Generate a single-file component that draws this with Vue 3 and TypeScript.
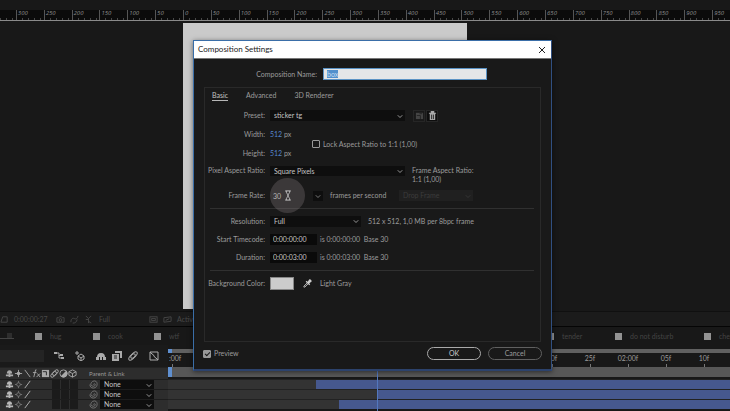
<script setup lang="ts">
import { onMounted, ref } from 'vue'

interface Layer {
  id: number
  start: number
}

const rulerMarks = ['', 300, 250, 200, 150, 100, 50, 0, 50, 100, 150, 200, 250, 300, 350, 400, 450, 500, 550, 600, 650, 700, 750, 800, 850, 900, 950]
const timeMarks = [':00f', '05f', '10f', '15f', '20f', '25f', '01:00f', '05f', '10f', '15f', '20f', '25f', '02:00f', '05f', '10f']
const compTabs = ['', 'hug', 'cook', 'wtf', 'tender', 'do not disturb', 'che']
const layers: Layer[] = [
  { id: 1, start: 26.4 },
  { id: 2, start: 37.2 },
  { id: 3, start: 30.5 },
]

const compName = ref('box')
const frameRate = ref('30')
const startTimecode = ref('0:00:00:00')
const duration = ref('0:00:03:00')
const lockAspect = ref(false)
const preview = ref(true)
const nameInput = ref<HTMLInputElement | null>(null)

onMounted(() => {
  nameInput.value?.focus()
  nameInput.value?.select()
})
</script>

<template>
  <div class="app">
    <header class="ruler">
      <div class="ruler-track">
        <span v-for="(mark, i) in rulerMarks" :key="i" class="ruler-mark">{{ mark }}</span>
      </div>
    </header>

    <main class="viewport">
      <div class="canvas"></div>
    </main>

    <div class="viewer-bar">
      <svg class="ico" viewBox="0 0 10 10"><path d="M1 8 3 2h5v6z" /></svg>
      <span class="viewer-time">0:00:00:27</span>
      <svg class="ico" viewBox="0 0 10 10"><path d="M1 3h2l1-1h2l1 1h2v5H1z" /><circle cx="5" cy="5.5" r="1.5" /></svg>
      <svg class="ico" viewBox="0 0 10 10"><path d="M1 8c0-4 2-5 4-4s3 0 4-3M3 9c3 0 4-1 5-4" /></svg>
      <svg class="ico" viewBox="0 0 10 10"><path d="M2 1l3 3 3-3M5 4v5M2 5h3M5 7l3 2" /></svg>
      <span class="viewer-res">Full</span>
      <svg class="ico" viewBox="0 0 10 10"><rect x="1" y="2" width="8" height="6" /><rect x="3" y="4" width="4" height="2" /></svg>
      <svg class="ico" viewBox="0 0 10 10"><path d="M1 8V3l8-1v5zM3 6l4-2" /></svg>
      <span>Active</span>
    </div>

    <nav class="comp-tabs">
      <a v-for="tab in compTabs" :key="tab" href="#" class="comp-tab" :class="{ current: tab === '' }">
        <i v-if="tab" class="chip"></i><span v-if="tab">{{ tab }}</span>
        <svg v-else class="menu" viewBox="0 0 8 8"><path d="M1 2h5M1 4h5M1 6h5" /></svg>
      </a>
    </nav>

    <section class="timeline">
      <div class="layers">
        <div class="tools">
          <input class="search" type="text" aria-label="Search layers" />
          <svg class="ico t1" viewBox="0 0 10 10"><path d="M0 2h5M5 2v5h4M5 4.500h4" /><path class="solid" d="M0 1h3v2H0zM6 3h3v2H6zM7 6h3v2H7z" /></svg>
          <svg class="ico t2" viewBox="0 0 10 10"><path d="M3 5l3-2 3 2v3L6 10 3 8zM3 5l3 2 3-2M6 7v3" /><path d="M0 2h4M2 0v4" /></svg>
          <svg class="ico t3" viewBox="0 0 10 10"><path class="solid" d="M1 6c0-2 1-4 4-4s4 2 4 4zM0 6h3v3H0zM4 6h2v3H4zM7 6h3v3H7z" /></svg>
          <svg class="ico t4" viewBox="0 0 10 10"><path class="solid" d="M3 0h7v7H8V2H3zM0 3h7v7H0z" /><path class="cut" d="M2 5h3M2 7h3" /></svg>
          <svg class="ico t5" viewBox="0 0 10 10"><ellipse cx="4" cy="6" rx="2" ry="4" transform="rotate(45 4 6)" /><ellipse cx="6" cy="4" rx="2" ry="4" transform="rotate(45 6 4)" /></svg>
          <svg class="ico t6" viewBox="0 0 10 10"><path d="M1 1h8v8H1zM1 1l2 2c2 0 2 4 4 4l2 2" /></svg>
        </div>
        <div class="columns">
          <svg class="ico" viewBox="0 0 10 10"><path class="solid" d="M2 5c0-5 6-5 6 0zM1 6h3v2H1zM4 5h2v4H4zM6 6h3v2H6z" /></svg>
          <svg class="ico" viewBox="0 0 10 10"><circle class="solid" cx="5" cy="5" r="2" /><path d="M5 1v8M1 5h8" /></svg>
          <svg class="ico" viewBox="0 0 10 10"><path d="M2 1l6 8" /></svg>
          <svg class="ico" viewBox="0 0 10 10"><path d="M5 1H4L2 9M1 4h4M6 5l3 4M9 5L5 9" /></svg>
          <svg class="ico" viewBox="0 0 10 10"><path class="solid" d="M1 1h8v8H1z" /><path class="cut" d="M2 3h4v4" /></svg>
          <svg class="ico" viewBox="0 0 10 10"><ellipse cx="4" cy="6" rx="2" ry="4" transform="rotate(45 4 6)" /><ellipse cx="6" cy="4" rx="2" ry="4" transform="rotate(45 6 4)" /></svg>
          <svg class="ico" viewBox="0 0 10 10"><circle cx="5" cy="5" r="4" /><path class="solid" d="M8 2a4 4 0 1 1-6 6z" /></svg>
          <svg class="ico" viewBox="0 0 10 10"><path d="M1 3l4-2 4 2v4L5 9 1 7zM1 3l4 2 4-2M5 5v4" /></svg>
          <span class="parent-title">Parent &amp; Link</span>
        </div>
        <div v-for="layer in layers" :key="layer.id" class="layer">
          <svg class="ico" viewBox="0 0 10 10"><path class="solid" d="M2 5c0-5 6-5 6 0zM1 6h3v2H1zM4 5h2v4H4zM6 6h3v2H6z" /></svg>
          <svg class="ico dim" viewBox="0 0 10 10"><circle cx="5" cy="5" r="2" /><path d="M5 1v2M5 7v2M1 5h2M7 5h2" /></svg>
          <svg class="ico" viewBox="0 0 10 10"><path d="M2 9l6-8" /></svg>
          <span class="switches"><i></i><i></i><i></i></span>
          <svg class="ico swirl" viewBox="0 0 10 10"><path d="M5 5c0-1 2-1 2 0s-1 2-2 2-3-1-3-2 1-4 4-4 3 3 3 4-1 4-4 4-4-2-4-4" /></svg>
          <span class="pick parent">
            <select aria-label="Parent layer"><option>None</option></select>
            <svg class="chev" viewBox="0 0 8 8"><path d="M1 3l3 3 3-3" /></svg>
          </span>
        </div>
      </div>

      <div class="tracks">
        <div class="scroller"></div>
        <div class="times">
          <span v-for="(mark, i) in timeMarks" :key="i" class="time">{{ mark }}</span>
        </div>
        <div class="work-area"></div>
        <div v-for="layer in layers" :key="layer.id" class="track">
          <div class="bar" :style="{ marginLeft: layer.start + '%' }"></div>
        </div>
        <div class="playhead"></div>
      </div>
    </section>

    <form class="dialog" role="dialog" aria-labelledby="dialog-title" @submit.prevent>
      <div class="title-bar">
        <h1 id="dialog-title">Composition Settings</h1>
        <button type="button" class="close" aria-label="Close">
          <svg viewBox="0 0 8 8"><path d="M1 1l6 6M7 1L1 7" /></svg>
        </button>
      </div>

      <div class="name-row">
        <label for="comp-name">Composition Name:</label>
        <input id="comp-name" ref="nameInput" v-model="compName" type="text" />
      </div>

      <div class="panel">
        <div class="tabs" role="tablist">
          <button type="button" role="tab" aria-selected="true" class="tab active">Basic</button>
          <button type="button" role="tab" aria-selected="false" class="tab">Advanced</button>
          <button type="button" role="tab" aria-selected="false" class="tab">3D Renderer</button>
        </div>

        <div class="row preset">
          <label for="preset">Preset:</label>
          <span class="pick wide">
            <select id="preset"><option>sticker tg</option></select>
            <svg class="chev" viewBox="0 0 8 8"><path d="M1 3l3 3 3-3" /></svg>
          </span>
          <button type="button" class="tool" aria-label="Save preset" disabled>
            <svg class="ico" viewBox="0 0 10 10"><path class="solid" d="M1 2h8v7H1z" /><path class="cut" d="M2 5h4v4M5 3h3" /></svg>
          </button>
          <button type="button" class="tool trash" aria-label="Delete preset">
            <svg class="ico" viewBox="0 0 10 10"><path class="solid" d="M1 2h2V0h4v2h2v1H1zM2 3h6v7H2z" /><path class="cut" d="M4 4v5M6 4v5" /></svg>
          </button>
        </div>

        <div class="size">
          <div class="size-fields">
            <div class="row"><label for="width">Width:</label><input id="width" class="hot" type="text" value="512" /><span>px</span></div>
            <div class="row"><label for="height">Height:</label><input id="height" class="hot" type="text" value="512" /><span>px</span></div>
          </div>
          <label class="check lock"><input v-model="lockAspect" type="checkbox" />Lock Aspect Ratio to 1:1 (1,00)</label>
        </div>

        <div class="row pixel-ratio">
          <label for="par">Pixel Aspect Ratio:</label>
          <span class="pick wide">
            <select id="par"><option>Square Pixels</option></select>
            <svg class="chev" viewBox="0 0 8 8"><path d="M1 3l3 3 3-3" /></svg>
          </span>
          <span class="ratio">Frame Aspect Ratio:<br />1:1 (1,00)</span>
        </div>

        <div class="row rate">
          <label for="rate">Frame Rate:</label>
          <span class="rate-field">
            <input id="rate" v-model="frameRate" type="text" />
            <span class="pointer">
              <svg viewBox="0 0 8 12"><path d="M1 1h6M1 11h6M2 1c0 3 2 3 2 5s-2 2-2 5M6 1c0 3-2 3-2 5s2 2 2 5" /></svg>
            </span>
          </span>
          <button type="button" class="drop" aria-label="Frame rate list">
            <svg class="chev" viewBox="0 0 8 8"><path d="M1 3l3 3 3-3" /></svg>
          </button>
          <span class="fps">frames per second</span>
          <span class="pick drop-frame">
            <select aria-label="Drop frame mode" disabled><option>Drop Frame</option></select>
            <svg class="chev" viewBox="0 0 8 8"><path d="M1 3l3 3 3-3" /></svg>
          </span>
        </div>

        <hr />

        <div class="row">
          <label for="resolution">Resolution:</label>
          <span class="pick mid">
            <select id="resolution"><option>Full</option></select>
            <svg class="chev" viewBox="0 0 8 8"><path d="M1 3l3 3 3-3" /></svg>
          </span>
          <span>512 x 512, 1,0 MB per 8bpc frame</span>
        </div>
        <div class="row">
          <label for="start">Start Timecode:</label>
          <input id="start" v-model="startTimecode" class="code" type="text" />
          <span>is 0:00:00:00&nbsp; Base 30</span>
        </div>
        <div class="row">
          <label for="duration">Duration:</label>
          <input id="duration" v-model="duration" class="code" type="text" />
          <span>is 0:00:03:00&nbsp; Base 30</span>
        </div>

        <hr class="spaced" />

        <div class="row">
          <span class="lead">Background Color:</span>
          <button type="button" class="swatch" aria-label="Background color"></button>
          <button type="button" class="dropper" aria-label="Pick color">
            <svg class="ico" viewBox="0 0 10 10"><path class="solid" d="M5 3l1-1c1-2 2-2 3-1s1 2-1 3L7 5l1 1-1 1-4-4 1-1z" /><path d="M5 4L1 8v1h1l4-4" /></svg>
          </button>
          <span>Light Gray</span>
        </div>
      </div>

      <footer class="actions">
        <label class="check"><input v-model="preview" type="checkbox" />Preview</label>
        <button type="submit" class="pill ok">OK</button>
        <button type="button" class="pill">Cancel</button>
      </footer>
    </form>
  </div>
</template>

<style>
body {
  background: #181818;
}
</style>

<style scoped>
* {
  box-sizing: border-box;
}

.app {
  position: relative;
  display: flex;
  flex-direction: column;
  min-height: 100vh;
  overflow: hidden;
  background: #181818;
  color: #9c9c9c;
  font: 7px/9px Lato, "Open Sans", sans-serif;
}

input,
select,
button {
  margin: 0;
  padding: 0;
  border: 0;
  border-radius: 0;
  background: none;
  color: inherit;
  font: inherit;
  appearance: none;
  outline: none;
}

svg {
  display: block;
  flex: none;
  fill: none;
  stroke: currentColor;
  stroke-width: 1;
}

.ico {
  width: 9px;
  height: 9px;
}

.solid {
  fill: currentColor;
  stroke: none;
}

.cut {
  stroke: #222;
}

/* ruler and viewport */
.ruler {
  margin-top: 10px;
  height: 11px;
  overflow: hidden;
  background: #0b0b0b;
  border-bottom: 1px solid #8a8a8a;
}

.ruler-track {
  display: grid;
  grid-template-columns: repeat(27, 1fr);
  margin: 0 -10px 0 -12px;
}

.ruler-mark {
  height: 10px;
  padding-left: 1px;
  border-left: 1px solid #555;
  color: #8c8c8c;
  font-family: "Open Sans", sans-serif;
  font-size: 6px;
  font-style: italic;
  line-height: 7px;
  background: repeating-linear-gradient(90deg, transparent 0 5px, #484848 5px 6px) bottom / 100% 2px no-repeat;
}

.viewport {
  display: flex;
  flex: 1;
}

.canvas {
  width: 39%;
  margin: 2px 0 2px 25%;
  background: #cacaca;
}

.viewer-bar {
  display: flex;
  align-items: center;
  gap: 5px;
  height: 16px;
  background: #1b1b1b;
  border-top: 1px solid #101010;
  border-bottom: 1px solid #050505;
  color: #484848;
}

.viewer-time {
  width: 37px;
}

.viewer-res {
  width: 46px;
  padding-left: 1px;
}

.comp-tabs {
  display: grid;
  grid-template-columns: 35px 58px 61px 1fr 68px 89px 26px;
  height: 18px;
}

.comp-tab {
  display: flex;
  align-items: center;
  gap: 8px;
  overflow: hidden;
  color: #444;
  text-decoration: none;
  white-space: nowrap;
}

.current {
  width: 14px;
  margin-bottom: 6px;
  padding-top: 6px;
  border-bottom: 1px solid #444;
}

.menu {
  width: 8px;
  height: 8px;
  margin-left: 6px;
}

.chip {
  flex: none;
  width: 7px;
  height: 7px;
  background: #929292;
}

/* timeline */
.timeline {
  display: grid;
  grid-template-columns: 168px 1fr;
  height: 66px;
}

.layers {
  background: #2d2d2d;
}

.tools {
  display: flex;
  align-items: center;
  height: 22px;
  background: #1a1a1a;
  color: #aaa;
}

.search {
  width: 44px;
  height: 12px;
  margin-right: 10px;
  background: #242424;
}

.tools .ico {
  width: 10px;
  height: 10px;
}

.t1,
.t2 {
  margin-right: 11px;
}

.t3,
.t4 {
  margin-right: 6px;
}

.t5 {
  margin-right: 11px;
}

.columns,
.layer {
  display: flex;
  align-items: center;
  padding-left: 5px;
}

.columns {
  height: 12px;
  border-top: 1px solid #222;
  color: #aaa;
}

.layer {
  height: 10px;
  border-top: 1px solid #1d1d1d;
  color: #b8b8b8;
}

.parent-title {
  margin-left: 12px;
  color: #999;
  font-size: 6px;
}

.switches {
  display: flex;
  gap: 1px;
  margin: 0 11px 0 20px;
}

.switches i {
  width: 8px;
  height: 9px;
  background: #1b1b1b;
}

.dim,
.swirl {
  color: #777;
}

.tracks {
  position: relative;
  overflow: hidden;
  padding-top: 4px;
  background: #181818;
}

.scroller,
.work-area {
  border-left: 4px solid #5f8fcf;
  background: #606060;
}

.scroller {
  height: 4px;
}

.times {
  display: grid;
  grid-template-columns: repeat(15, 1fr);
  height: 14px;
  margin: 0 7px 0 -15px;
}

.time {
  display: flex;
  flex-direction: column;
  align-items: center;
  line-height: 11px;
}

.time:first-child {
  align-items: flex-start;
  padding-left: 16px;
}

.time::after {
  content: "";
  width: 1px;
  height: 3px;
  background: #777;
}

.time:first-child::after {
  margin-left: 3px;
}

.work-area {
  height: 10px;
  margin-bottom: 2px;
  background: #575757;
}

.track {
  height: 10px;
  border-top: 1px solid #222;
  background: #333;
}

.bar {
  height: 9px;
  background: #46588e;
}

.playhead {
  position: absolute;
  top: 20px;
  bottom: 0;
  left: 37.2%;
  width: 1px;
  background: #5277be;
}

/* dialog */
.dialog {
  position: absolute;
  top: 40px;
  right: 178px;
  left: 193px;
  border: 1px solid #3a6ea8;
  border-right-color: #304f80;
  border-bottom: 2px solid #2c426c;
  background: #191919;
  box-shadow: 0 1px 5px rgba(0, 0, 0, 0.5);
}

.title-bar {
  display: flex;
  align-items: center;
  justify-content: space-between;
  height: 18px;
  padding: 0 5px 0 4px;
  background: #fff;
  border-bottom: 1px solid #777;
  color: #222;
}

h1 {
  margin: 0;
  font-size: 8px;
  font-weight: 400;
}

.close {
  display: block;
  width: 8px;
  height: 8px;
}

.close svg {
  width: 8px;
  height: 8px;
}

.name-row {
  display: flex;
  align-items: center;
  gap: 6px;
  padding: 9px 64px 7px 0;
}

.name-row label {
  width: 123px;
  text-align: right;
}

.name-row input {
  flex: 1;
  min-width: 0;
  height: 12px;
  padding: 0 3px;
  border: 1px solid #5b93c5;
  background: #e4e6e8;
  color: #333;
}

.name-row input::selection {
  background: #5290cc;
  color: #c4dcf2;
}

.panel {
  margin: 0 10px;
  padding: 0 6px 49px 5px;
  border: 1px solid #292929;
}

.tabs {
  display: flex;
  gap: 18px;
  height: 18px;
  padding: 2px 0 0 2px;
}

.tab {
  height: 11px;
  border-bottom: 1px solid transparent;
}

.active {
  border-color: #b8b8b8;
  color: #c4c4c4;
}

.row {
  display: flex;
  align-items: center;
  height: 18px;
  white-space: nowrap;
}

.row > label,
.lead {
  display: flex;
  flex: none;
  justify-content: flex-end;
  width: 55px;
  margin-right: 5px;
}

.pick {
  display: grid;
  align-items: center;
  flex: none;
  height: 11px;
  background: #0e0e0e;
  color: #c4c4c4;
}

.pick select {
  grid-area: 1 / 1;
  width: 100%;
  height: 11px;
  padding-left: 4px;
  opacity: 1;
}

.chev {
  grid-area: 1 / 1;
  justify-self: end;
  width: 6px;
  height: 6px;
  margin-right: 2px;
  pointer-events: none;
}

.wide {
  width: 135px;
}

.mid {
  width: 91px;
  margin-right: 7px;
}

.parent {
  width: 54px;
  height: 9px;
  margin-left: 2px;
}

.parent select {
  height: 9px;
}

.preset {
  height: 19px;
}

.tool {
  display: grid;
  place-items: center;
  width: 12px;
  height: 12px;
  border: 1px solid #262626;
  color: #444;
}

.preset .tool {
  margin-left: 8px;
}

.preset .trash {
  margin-left: 1px;
  background: #0e0e0e;
  color: #aaa;
}

.size {
  display: flex;
  align-items: center;
}

.size-fields .row {
  height: 19px;
}

.hot {
  width: 12px;
  margin-right: 2px;
  color: #5585cc;
}

.lock {
  margin-left: 20px;
}

.check {
  display: flex;
  align-items: center;
  gap: 3px;
  white-space: nowrap;
}

.size-fields span {
  width: 8px;
}

.check input {
  width: 8px;
  height: 8px;
  border: 1px solid #999;
  border-radius: 1px;
}

.check input:checked {
  background: #999;
}

.check input:checked::before {
  content: "";
  display: block;
  width: 2px;
  height: 4px;
  margin: 0 auto;
  border: solid #191919;
  border-width: 0 1px 1px 0;
  transform: rotate(45deg);
}

.pixel-ratio {
  align-items: flex-start;
  height: 20px;
  padding-top: 3px;
}

.pixel-ratio .pick {
  height: 10px;
}

.pixel-ratio select {
  height: 10px;
}

.ratio {
  margin-left: 7px;
}

.rate {
  height: 25px;
}

.rate-field {
  position: relative;
  width: 43px;
}

.rate-field input {
  width: 35px;
  height: 11px;
  padding-left: 3px;
  color: #c4c4c4;
}

.pointer {
  position: absolute;
  top: -12px;
  left: 0;
  display: grid;
  place-items: center;
  width: 35px;
  height: 35px;
  border-radius: 50%;
  background: rgba(140, 128, 132, 0.3);
  color: #ccc;
  pointer-events: none;
}

.pointer svg {
  width: 8px;
  height: 11px;
}

.drop {
  display: grid;
  place-items: center;
  width: 10px;
  height: 10px;
  background: #0e0e0e;
}

.drop .chev {
  justify-self: center;
  margin: 0;
}

.fps {
  width: 62px;
  margin: 0 7px;
}

.drop-frame {
  width: 74px;
  background: #202020;
  color: #3c3c3c;
}

hr {
  height: 1px;
  margin: 0 0 3px;
  border: 0;
  background: #303030;
}

.spaced {
  margin-top: 4px;
}

.code {
  width: 47px;
  height: 11px;
  margin-right: 3px;
  padding-left: 3px;
  background: #0a0a0a;
  color: #c4c4c4;
}

.swatch {
  width: 24px;
  height: 13px;
  border: 1px solid #888;
  background: #ccc;
}

.dropper {
  display: grid;
  place-items: center;
  width: 12px;
  height: 12px;
  margin: 0 7px;
  color: #ccc;
}

.actions {
  display: flex;
  align-items: center;
  gap: 7px;
  padding: 5px 9px 9px;
}

.actions .check {
  margin-right: auto;
}

.pill {
  width: 54px;
  height: 13px;
  border: 1px solid #606060;
  border-radius: 7px;
}

.ok {
  border-color: #aaa;
  color: #ccc;
}
</style>
